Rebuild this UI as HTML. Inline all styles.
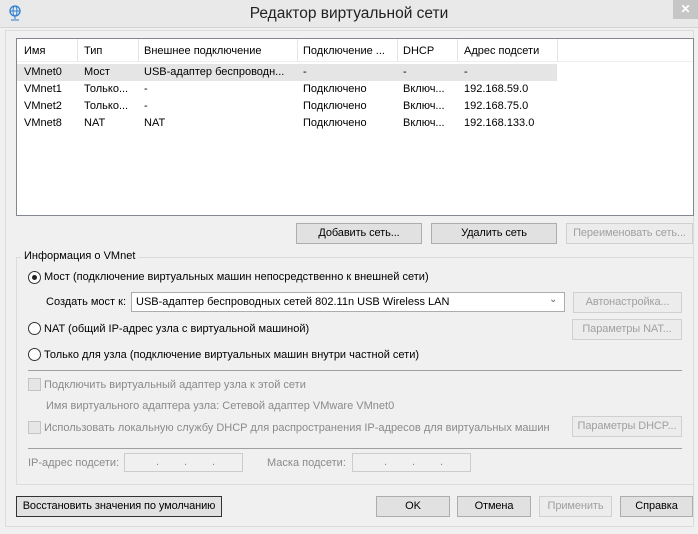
<!DOCTYPE html>
<html><head><meta charset="utf-8"><style>
*{margin:0;padding:0;box-sizing:border-box}
body{width:698px;height:534px;background:#f0f0f0;font-family:"Liberation Sans","Noto Sans CJK SC",sans-serif;font-size:11px;color:#000;position:relative;overflow:hidden}
.a{position:absolute;white-space:nowrap}
.btn{position:absolute;border:1px solid #adadad;background:#e1e1e1;text-align:center;line-height:19px;height:21px;white-space:nowrap;letter-spacing:-0.1px}
.dis{color:#a0a0a0;border-color:#d0d0d0;background:#ececec}
.g{color:#8a8a8a}
.radio{position:absolute;width:13px;height:13px;border:1px solid #333;border-radius:50%;background:#fff}
.cb{position:absolute;width:13px;height:13px;border:1px solid #c4c4c4;background:#e6e6e6}
.sep{position:absolute;height:1px;background:#a0a0a0}
</style></head><body>
<div class="a" style="left:0;top:0;width:698px;height:28px;background:#e9e9e9;border-bottom:1px solid #d4d4d4"></div>
<svg class="a" style="left:8px;top:5px" width="14" height="16" viewBox="0 0 14 16"><circle cx="7" cy="6" r="5" fill="none" stroke="#2a7fd4" stroke-width="1.3"/><ellipse cx="7" cy="6" rx="2" ry="5" fill="none" stroke="#2a7fd4"/><path d="M2 6h10M7 11v3M3 15h8" stroke="#2a7fd4"/></svg>
<div class="a" style="left:0;width:698px;top:5px;text-align:center;font-size:15.5px;color:#222">Редактор виртуальной сети</div>
<div class="a" style="left:673px;top:0;width:25px;height:19px;background:#c6c6c6;color:#fff;text-align:center;font-size:12px;line-height:19px;font-weight:bold">✕</div>
<div class="a" style="left:5px;top:30px;width:689px;height:497px;border:1px solid #dcdcdc"></div>

<div class="a" style="left:16px;top:38px;width:678px;height:178px;background:#fff;border:1px solid #828790"></div>
<div class="a" style="left:17px;top:39px;width:676px;height:23px;border-bottom:1px solid #eee"></div>
<div class="a" style="left:77px;top:39px;width:1px;height:23px;background:#e5e5e5"></div>
<div class="a" style="left:138px;top:39px;width:1px;height:23px;background:#e5e5e5"></div>
<div class="a" style="left:297px;top:39px;width:1px;height:23px;background:#e5e5e5"></div>
<div class="a" style="left:397px;top:39px;width:1px;height:23px;background:#e5e5e5"></div>
<div class="a" style="left:457px;top:39px;width:1px;height:23px;background:#e5e5e5"></div>
<div class="a" style="left:557px;top:39px;width:1px;height:23px;background:#e5e5e5"></div>
<div class="a" style="left:24px;top:45px">Имя</div><div class="a" style="left:84px;top:45px">Тип</div><div class="a" style="left:144px;top:45px">Внешнее подключение</div><div class="a" style="left:303px;top:45px">Подключение ...</div><div class="a" style="left:403px;top:45px">DHCP</div><div class="a" style="left:464px;top:45px">Адрес подсети</div>
<div class="a" style="left:17px;top:64px;width:540px;height:17px;background:#e5e5e5"></div>
<div class="a" style="left:24px;top:66px">VMnet0</div><div class="a" style="left:84px;top:66px">Мост</div><div class="a" style="left:144px;top:66px">USB-адаптер беспроводн...</div><div class="a" style="left:303px;top:66px">-</div><div class="a" style="left:403px;top:66px">-</div><div class="a" style="left:464px;top:66px">-</div>
<div class="a" style="left:24px;top:83px">VMnet1</div><div class="a" style="left:84px;top:83px">Только...</div><div class="a" style="left:144px;top:83px">-</div><div class="a" style="left:303px;top:83px">Подключено</div><div class="a" style="left:403px;top:83px">Включ...</div><div class="a" style="left:464px;top:83px">192.168.59.0</div>
<div class="a" style="left:24px;top:100px">VMnet2</div><div class="a" style="left:84px;top:100px">Только...</div><div class="a" style="left:144px;top:100px">-</div><div class="a" style="left:303px;top:100px">Подключено</div><div class="a" style="left:403px;top:100px">Включ...</div><div class="a" style="left:464px;top:100px">192.168.75.0</div>
<div class="a" style="left:24px;top:117px">VMnet8</div><div class="a" style="left:84px;top:117px">NAT</div><div class="a" style="left:144px;top:117px">NAT</div><div class="a" style="left:303px;top:117px">Подключено</div><div class="a" style="left:403px;top:117px">Включ...</div><div class="a" style="left:464px;top:117px">192.168.133.0</div>

<div class="btn" style="left:296px;top:223px;width:126px">Добавить сеть...</div>
<div class="btn" style="left:431px;top:223px;width:126px">Удалить сеть</div>
<div class="btn dis" style="left:566px;top:223px;width:127px">Переименовать сеть...</div>

<div class="a" style="left:16px;top:257px;width:678px;height:228px;border:1px solid #dcdcdc"></div>
<div class="a" style="left:21px;top:250px;background:#f0f0f0;padding:0 3px">Информация о VMnet</div>
<div class="radio" style="left:28px;top:271px"></div><div class="a" style="left:32px;top:275px;width:5px;height:5px;border-radius:50%;background:#222"></div>
<div class="a" style="left:44px;top:271px">Мост (подключение виртуальных машин непосредственно к внешней сети)</div>
<div class="a" style="left:46px;top:296px">Создать мост к:</div>
<div class="a" style="left:131px;top:292px;width:434px;height:20px;border:1px solid #acacac;background:#fff;padding:3px 4px">USB-адаптер беспроводных сетей 802.11n USB Wireless LAN</div>
<div class="a" style="left:549px;top:294px;color:#666;font-size:10px">⌄</div>
<div class="btn dis" style="left:573px;top:292px;width:109px">Автонастройка...</div>
<div class="radio" style="left:28px;top:322px"></div>
<div class="a" style="left:44px;top:323px">NAT (общий IP-адрес узла с виртуальной машиной)</div>
<div class="btn dis" style="left:572px;top:319px;width:110px">Параметры NAT...</div>
<div class="radio" style="left:28px;top:348px"></div>
<div class="a" style="left:44px;top:349px">Только для узла (подключение виртуальных машин внутри частной сети)</div>
<div class="sep" style="left:28px;top:370px;width:654px"></div>
<div class="cb" style="left:28px;top:378px"></div>
<div class="a g" style="left:44px;top:379px">Подключить виртуальный адаптер узла к этой сети</div>
<div class="a g" style="left:46px;top:400px">Имя виртуального адаптера узла: Сетевой адаптер VMware VMnet0</div>
<div class="cb" style="left:28px;top:421px"></div>
<div class="a g" style="left:44px;top:422px">Использовать локальную службу DHCP для распространения IP-адресов для виртуальных машин</div>
<div class="btn dis" style="left:572px;top:416px;width:110px">Параметры DHCP...</div>
<div class="sep" style="left:28px;top:448px;width:654px"></div>
<div class="a g" style="left:28px;top:457px">IP-адрес подсети:</div>
<div class="a g" style="left:124px;top:453px;width:119px;height:19px;border:1px solid #ccc;background:#f0f0f0"><span class="a" style="left:31px;top:2px">.</span><span class="a" style="left:59px;top:2px">.</span><span class="a" style="left:87px;top:2px">.</span></div>
<div class="a g" style="left:267px;top:457px">Маска подсети:</div>
<div class="a g" style="left:352px;top:453px;width:119px;height:19px;border:1px solid #ccc;background:#f0f0f0"><span class="a" style="left:31px;top:2px">.</span><span class="a" style="left:59px;top:2px">.</span><span class="a" style="left:87px;top:2px">.</span></div>

<div class="btn" style="left:16px;top:496px;width:206px;border-color:#333">Восстановить значения по умолчанию</div>
<div class="btn" style="left:376px;top:496px;width:74px">OK</div>
<div class="btn" style="left:457px;top:496px;width:74px">Отмена</div>
<div class="btn dis" style="left:539px;top:496px;width:73px">Применить</div>
<div class="btn" style="left:620px;top:496px;width:73px">Справка</div>
</body></html>
